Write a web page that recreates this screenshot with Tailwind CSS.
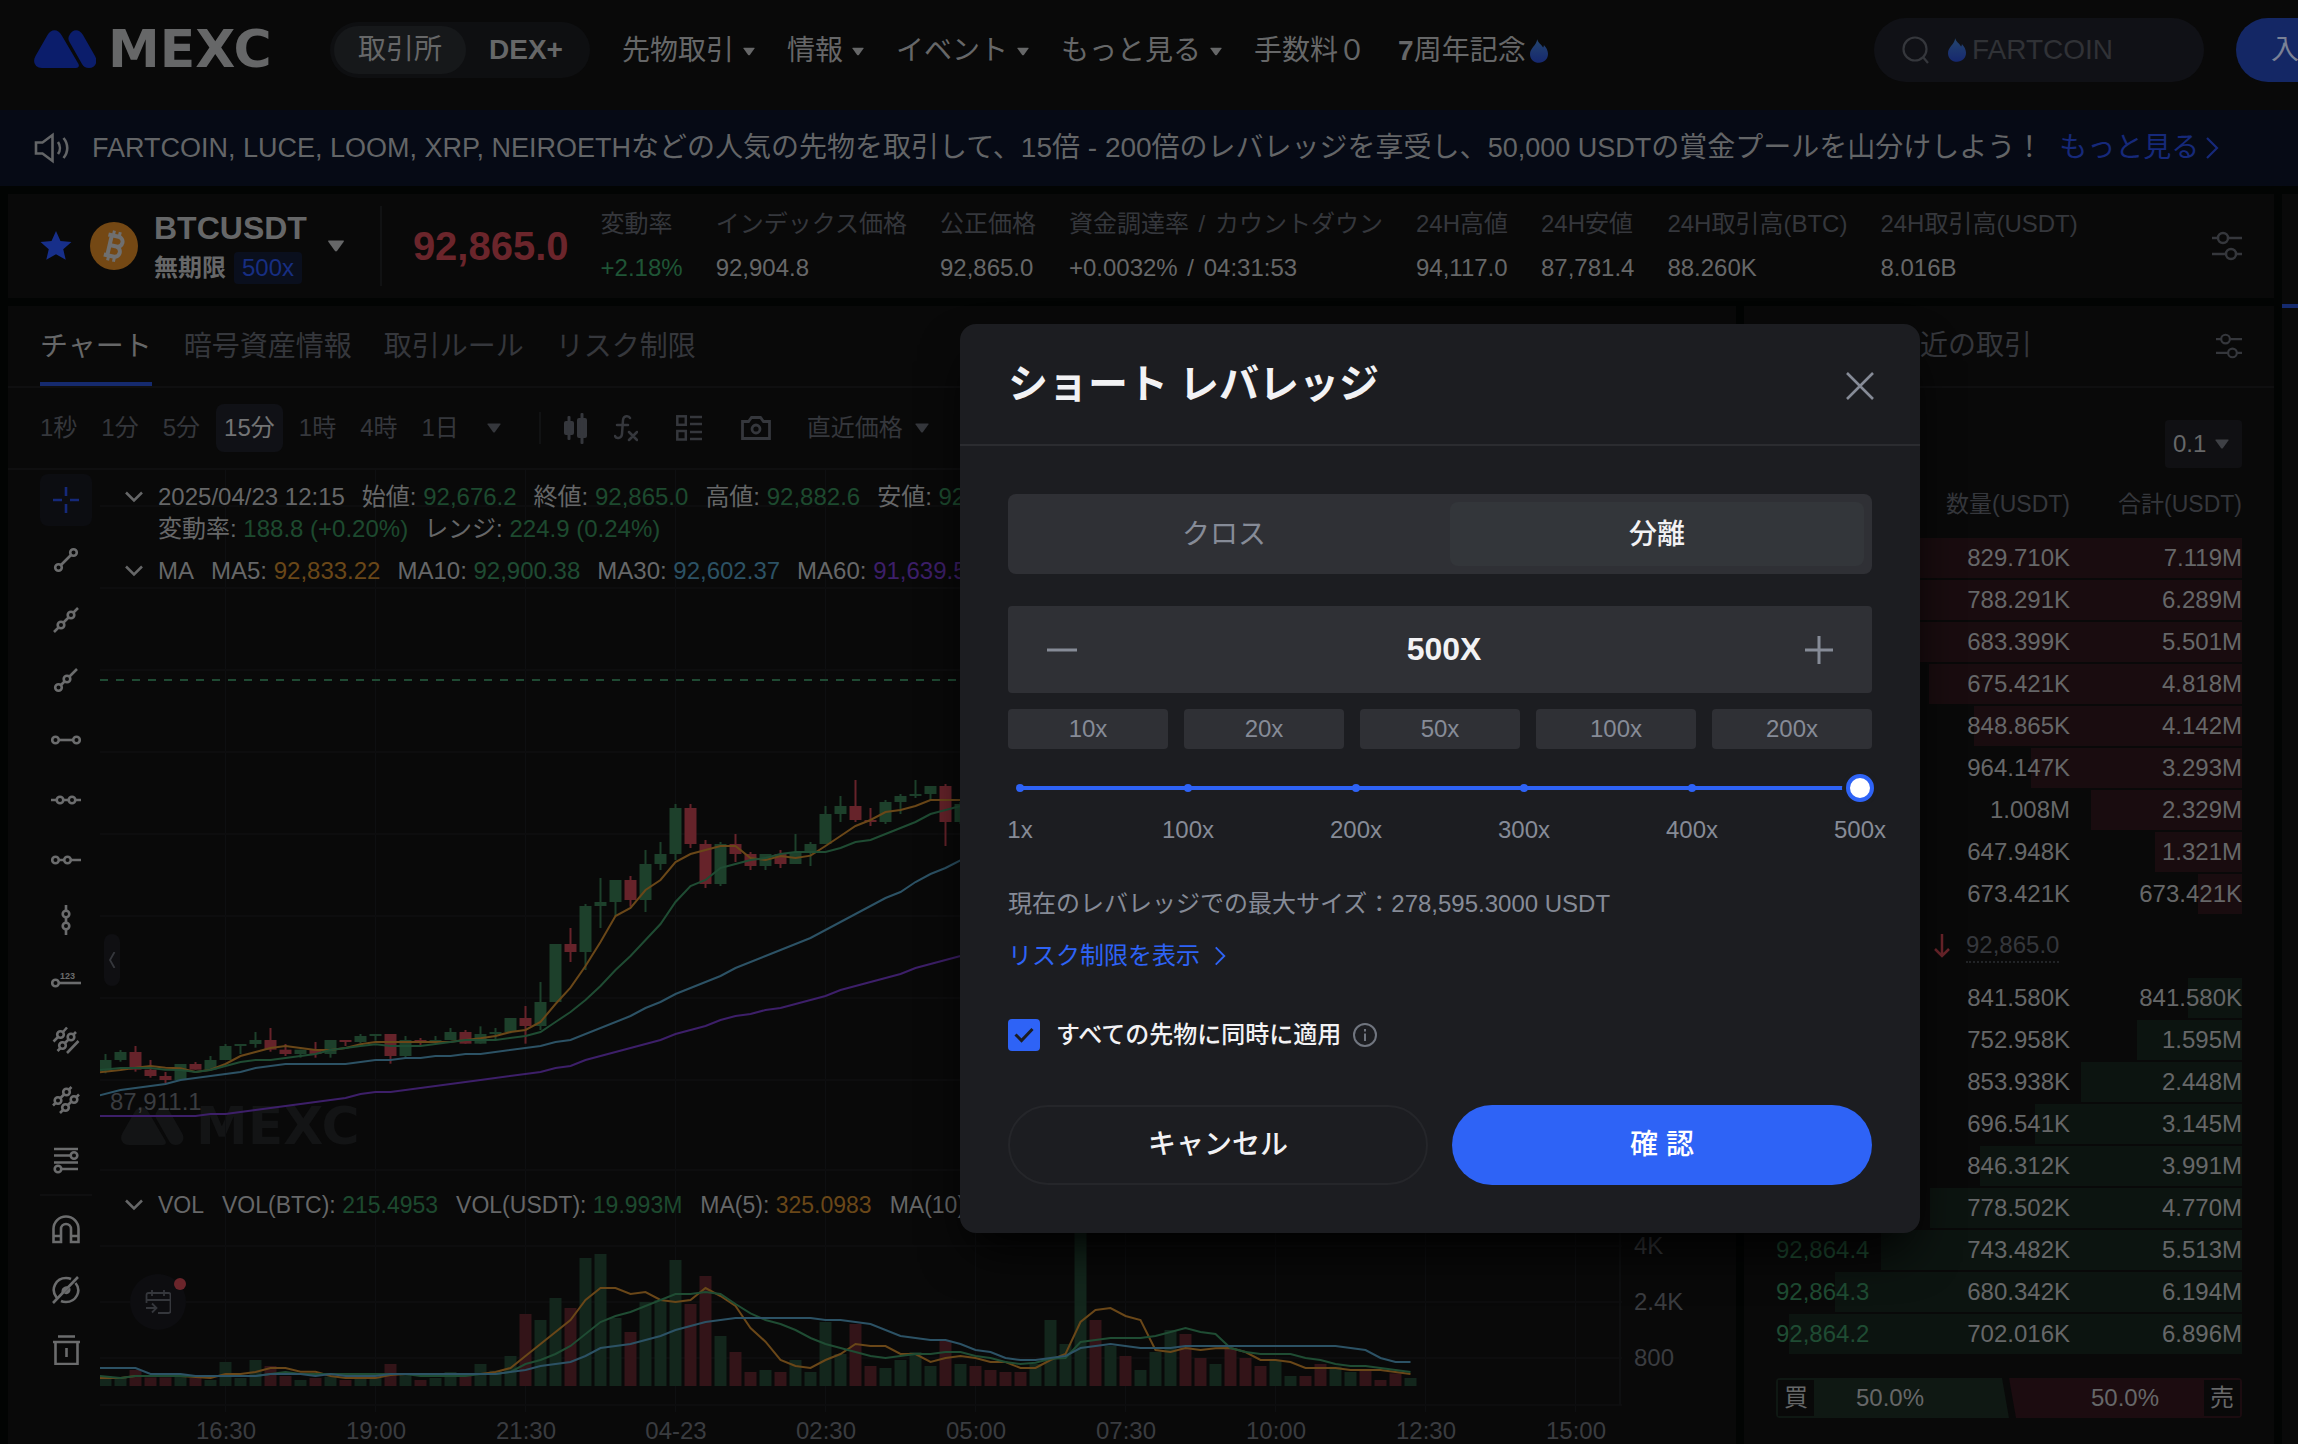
<!DOCTYPE html>
<html lang="ja">
<head>
<meta charset="utf-8">
<meta name="viewport" content="width=device-width, initial-scale=1">
<title>BTCUSDT 無期限 | MEXC</title>
<script src="https://cdn.jsdelivr.net/npm/@tailwindcss/browser@4"></script>
</head>
<body class="relative min-h-screen overflow-hidden bg-[#020403] font-['Liberation_Sans','Noto_Sans_CJK_JP',sans-serif] text-2xl leading-8 text-[#666768]">

<svg class="absolute size-0" aria-hidden="true">
  <symbol id="caret" viewBox="0 0 14 10"><path d="M1 0.5h12q1 0 .4 1L8 9q-1 1-2 0L.6 1.500Q0 .5 1 .5z" fill="currentColor"/></symbol>
  <symbol id="flame" viewBox="0 0 20 26"><path d="M8 0c1 4 5 6 6.500 9 .8-.7 1-1.700.9-2.700C18 9 20 12.500 20 16c0 6-4.500 10-10 10S0 22 0 16.500C0 10 7 7 8 0z" fill="url(#flameFill)"/></symbol>
  <symbol id="mark" viewBox="0 0 62 38"><path d="M13.500 5C17-1.500 24-1.500 27.500 5l17 29c1 2 0 4-2.500 4H8C1.500 38-2 32 1.500 26z" fill="currentColor"/><path d="M35.500 5c3-6.500 10-6.500 13.500 0l12 21c3.500 6 0 12-6 12-3.500 0-5.500-1.500-7-4L35.500 12c-1.500-2.500-1.500-4.500 0-7z" fill="currentColor"/></symbol>
  <symbol id="sliders" viewBox="0 0 30 30"><g fill="none" stroke="currentColor" stroke-width="2.500"><path d="M0 7h6M16 7h14M0 23h14M24 23h6"/><circle cx="11" cy="7" r="5"/><circle cx="19" cy="23" r="5"/></g></symbol>
  <symbol id="down" viewBox="0 0 18 12"><path d="M1 1.500l8 8 8-8" fill="none" stroke="currentColor" stroke-width="2.500"/></symbol>
  <symbol id="right" viewBox="0 0 14 22"><path d="M2 1l10 10L2 21" fill="none" stroke="currentColor" stroke-width="2.200"/></symbol>
  <defs><linearGradient id="flameFill" x1="0" y1="0" x2="0" y2="1"><stop offset="0" stop-color="#24456f"/><stop offset="1" stop-color="#16286f"/></linearGradient></defs>
</svg>

<header class="flex h-[110px] items-start overflow-hidden bg-[#090909] pl-[34px] text-[28px]">
  <a href="#" class="mt-[30px] flex h-[38px] items-center gap-3" aria-label="MEXC">
    <svg class="h-[38px] w-[62px] text-[#0b1d6b]"><use href="#mark"/></svg>
    <span class="w-[190px] font-['DejaVu_Sans',sans-serif] text-[52px] font-bold leading-none">MEXC</span>
  </a>
  <div class="ml-8 mt-[22px] flex h-14 items-center rounded-full bg-[#0e0f11] px-1">
    <button class="flex h-12 w-[132px] items-center justify-center rounded-full bg-[#16181a]">取引所</button>
    <button class="h-12 w-[120px] font-bold">DEX+</button>
  </div>
  <nav class="ml-8 mt-[35px] flex items-center gap-8 whitespace-nowrap">
    <a href="#" class="flex items-center gap-[9px]">先物取引<svg class="h-[9px] w-3"><use href="#caret"/></svg></a>
    <a href="#" class="flex items-center gap-[9px]">情報<svg class="h-[9px] w-3"><use href="#caret"/></svg></a>
    <a href="#" class="flex items-center gap-[9px]">イベント<svg class="h-[9px] w-3"><use href="#caret"/></svg></a>
    <a href="#" class="flex items-center gap-[9px]">もっと見る<svg class="h-[9px] w-3"><use href="#caret"/></svg></a>
    <a href="#">手数料０</a>
    <a href="#" class="flex items-center gap-1"><span><b>7</b>周年記念</span><svg class="h-[26px] w-[18px]"><use href="#flame"/></svg></a>
  </nav>
  <div class="ml-auto mt-[18px] flex gap-8">
    <label class="flex h-16 w-[330px] items-center rounded-full bg-[#101116] pl-7 pr-6" aria-label="検索">
      <svg class="size-7 shrink-0 text-[#35373c]" viewBox="0 0 28 28" fill="none" stroke="currentColor" stroke-width="2.200"><circle cx="13" cy="13" r="11.500"/><path d="M21 21l5 6"/></svg>
      <svg class="ml-[18px] mr-1.5 h-6 w-[18px] shrink-0"><use href="#flame"/></svg>
      <input type="text" placeholder="FARTCOIN" class="min-w-0 flex-1 bg-transparent font-medium outline-none placeholder:text-[#303236]">
    </label>
    <button class="-mr-16 h-16 w-[126px] rounded-full bg-[#142765] text-[#7a8196]">入金</button>
  </div>
</header>

<aside class="flex h-[76px] items-center whitespace-nowrap bg-[#060a15] pl-[34px] text-[28px] text-[#636567]">
  <svg class="mr-[22px] h-8 w-9" viewBox="0 0 36 32" fill="none" stroke="currentColor" stroke-width="2.600"><path d="M2 10.500h6.500L18.500 3v26L8.500 21.500H2z"/><path d="M24 10c2.500 3.500 2.500 8.500 0 12M29.500 6c5 6 5 14 0 20"/></svg>
  <p><span class="text-[27px]">FARTCOIN, LUCE, LOOM, XRP, NEIROETH</span>などの人気の先物を取引して、15倍 - 200倍のレバレッジを享受し、<span class="text-[27px]">50,000 USDT</span>の賞金プールを山分けしよう！</p>
  <a href="#" class="ml-4 flex items-center gap-1.5 text-[#16297a]">もっと見る<svg class="h-[22px] w-3.5"><use href="#right"/></svg></a>
</aside>

<div class="flex gap-2 pl-2 pt-2">
  <div class="flex min-w-0 flex-1 flex-col gap-2">

    <section class="flex h-[104px] items-center bg-[#090909] pl-8 pr-8">
      <svg class="h-[30px] w-[32px] text-[#172f8a]" viewBox="0 0 30 28"><path d="M15 0l4.200 9.300 10.300 1-7.700 6.700 2.300 10L15 21.800 5.900 27l2.300-10L.5 10.300l10.300-1z" fill="currentColor"/></svg>
      <svg class="ml-[18px] size-12" viewBox="0 0 48 48"><circle cx="24" cy="24" r="24" fill="#744814"/><g transform="rotate(13 24 24)" fill="none" stroke="#6f6f6f" stroke-width="4"><path d="M16 14h10.500a5 5 0 0 1 0 10H19.500M26.500 24a5.300 5.300 0 0 1 0 10.500H16M19.500 14v20.500"/><path d="M21 9v5M27 9v5M21 34.500v5M27 34.500v5" stroke-width="3"/></g></svg>
      <div class="ml-4">
        <h1 class="text-[32px] font-bold leading-10">BTCUSDT</h1>
        <div class="mt-1 flex items-center gap-2"><b>無期限</b><span class="rounded bg-[#0a0f1d] px-2 text-[#172e82]">500x</span></div>
      </div>
      <svg class="ml-[19px] h-3 w-5"><use href="#caret"/></svg>
      <div class="ml-[34px] h-20 w-0.5 bg-[#111213]"></div>
      <strong class="ml-[31px] text-[40px] leading-10 text-[#6b252b]">92,865.0</strong>
      <dl id="stats" class="ml-8 flex gap-[33px] whitespace-nowrap"></dl>
      <button class="ml-auto text-[#35373c]" aria-label="設定"><svg class="size-[30px]"><use href="#sliders"/></svg></button>
    </section>

    <div class="flex gap-2">
      <section class="min-w-0 flex-1 bg-[#090909]">
        <nav class="flex h-[82px] gap-8 border-b-2 border-[#0f0f10] pl-8 text-[28px] text-[#35373c]">
          <a href="#" class="flex h-20 items-center border-b-4 border-[#152a6e] pt-1.5 text-[#666768]">チャート</a>
          <a href="#" class="flex h-20 items-center border-b-4 border-transparent pt-1.5">暗号資産情報</a>
          <a href="#" class="flex h-20 items-center border-b-4 border-transparent pt-1.5">取引ルール</a>
          <a href="#" class="flex h-20 items-center border-b-4 border-transparent pt-1.5">リスク制限</a>
        </nav>
        <div class="flex h-[82px] items-center border-b-2 border-[#0f0f10] pl-6 text-[#35373c]">
          <div class="flex gap-2">
            <button class="h-12 px-2">1秒</button>
            <button class="h-12 px-2">1分</button>
            <button class="h-12 px-2">5分</button>
            <button class="h-12 rounded-lg bg-[#101116] px-2 text-[#737475]">15分</button>
            <button class="h-12 px-2">1時</button>
            <button class="h-12 px-2">4時</button>
            <button class="h-12 px-2">1日</button>
          </div>
          <button class="ml-5" aria-label="その他の時間足"><svg class="h-2.5 w-3.5"><use href="#caret"/></svg></button>
          <div class="ml-[38px] h-8 w-0.5 bg-[#111213]"></div>
          <button class="ml-[23px]" aria-label="ローソク足"><svg class="h-8 w-6" viewBox="0 0 24 32" fill="currentColor"><rect x="0" y="9" width="10" height="14" rx="2"/><rect x="3.500" y="4" width="3" height="24" rx="1"/><rect x="13" y="6" width="10" height="20" rx="2"/><rect x="16.500" y="1" width="3" height="31" rx="1"/></svg></button>
          <button class="ml-[26px]" aria-label="インジケーター"><svg class="h-7 w-6" viewBox="0 0 24 28" fill="none" stroke="currentColor" stroke-width="2.500" stroke-linecap="round"><path d="M16 4c-1-2.500-6.500-3-7 2L8 20c-.4 5-6 5-7 2M3 11h11M15 18l8 8M23 18l-8 8"/></svg></button>
          <button class="ml-[38px]" aria-label="レイアウト"><svg class="size-[26px]" viewBox="0 0 26 26" fill="none" stroke="currentColor" stroke-width="2.500"><rect x="1.300" y="1.300" width="8.500" height="8.500"/><rect x="1.300" y="16" width="8.500" height="8.500"/><path d="M14 2h12M14 9h12M14 17h12M14 24h12"/></svg></button>
          <button class="ml-[39px]" aria-label="スクリーンショット"><svg class="h-6 w-[30px]" viewBox="0 0 30 24" fill="none" stroke="currentColor" stroke-width="2.800"><path d="M1.500 5.500h6l3-4h9l3 4h6v17h-27z"/><circle cx="15" cy="13" r="4"/></svg></button>
          <label class="ml-9 flex items-center gap-3" aria-label="価格の種類">
            <select class="appearance-none bg-transparent outline-none"><option>直近価格</option></select>
            <svg class="h-2.5 w-3.5"><use href="#caret"/></svg>
          </label>
        </div>

        <div class="flex">
          <div id="tools" class="ml-8 flex w-[52px] shrink-0 flex-col gap-2 pt-1 text-[#6b6c6d]"></div>
          <div class="relative ml-2 min-w-0 flex-1">
            <div class="absolute left-5 top-[637px] flex h-[38px] items-center gap-3 text-[#131415]">
              <svg class="h-[38px] w-16"><use href="#mark"/></svg><span class="font-['DejaVu_Sans',sans-serif] text-[52px] font-bold leading-none">MEXC</span>
            </div>
            <svg id="chart" class="relative block h-[974px] w-full text-[24px]" role="img" aria-label="BTCUSDT 15分足チャート"></svg>
            <div class="absolute left-[25px] top-[11px] whitespace-nowrap">
              <div class="flex items-center gap-[15px]"><svg class="h-3 w-[18px]"><use href="#down"/></svg>
                <p class="flex gap-[17px]"><span>2025/04/23 12:15</span><span>始値: <i class="not-italic text-[#1d4a2f]">92,676.2</i></span><span>終値: <i class="not-italic text-[#1d4a2f]">92,865.0</i></span><span>高値: <i class="not-italic text-[#1d4a2f]">92,882.6</i></span><span>安値: <i class="not-italic text-[#1d4a2f]">92,657.7</i></span></p></div>
              <p class="flex gap-4 pl-[33px]"><span>変動率: <i class="not-italic text-[#1d4a2f]">188.8 (+0.20%)</i></span><span>レンジ: <i class="not-italic text-[#1d4a2f]">224.9 (0.24%)</i></span></p>
              <div class="mt-2.5 flex items-center gap-[15px]"><svg class="h-3 w-[18px]"><use href="#down"/></svg>
                <p class="flex gap-[17px]"><span>MA</span><span>MA5: <i class="not-italic text-[#6a4718]">92,833.22</i></span><span>MA10: <i class="not-italic text-[#1f4c33]">92,900.38</i></span><span>MA30: <i class="not-italic text-[#2c5265]">92,602.37</i></span><span>MA60: <i class="not-italic text-[#3d1f69]">91,639.55</i></span></p></div>
            </div>
            <div class="absolute left-[25px] top-[719px] flex items-center gap-[15px] whitespace-nowrap text-[23px]"><svg class="h-3 w-[18px]"><use href="#down"/></svg>
              <p class="flex gap-[18px]"><span>VOL</span><span>VOL(BTC): <i class="not-italic text-[#1d4a2f]">215.4953</i></span><span>VOL(USDT): <i class="not-italic text-[#1d4a2f]">19.993M</i></span><span>MA(5): <i class="not-italic text-[#6a4718]">325.0983</i></span><span>MA(10): <i class="not-italic text-[#1f4c33]">402.7716</i></span></p>
            </div>
            <button class="absolute left-1 top-[464px] flex h-[52px] w-4 items-center justify-center rounded-lg bg-[#0f0f12] text-[#35373c]" aria-label="ツールを隠す"><svg class="h-4 w-2" viewBox="0 0 8 16" fill="none" stroke="currentColor" stroke-width="1.800"><path d="M6.500 0L2 8l4.500 8"/></svg></button>
            <button class="absolute left-[30px] top-[804px] flex size-14 items-center justify-center rounded-full bg-[#0d0d10] text-[#35373c]" aria-label="イベント">
              <svg class="h-6 w-[26px]" viewBox="0 0 26 24" fill="none" stroke="currentColor" stroke-width="1.800"><path d="M1.500 13V5q0-2 2-2h20q2 0 2 2v16q0 2-2 2H13M1.500 10h24M7 0v6M19 0v6M1 18h10M7 13.500l4.500 4.500L7 22.500"/></svg>
              <span class="absolute right-0 top-1 size-3 rounded-full bg-[#6b252b]"></span>
            </button>
          </div>
        </div>
      </section>

      <section class="w-[530px] shrink-0 bg-[#090909]">
        <div class="flex h-[82px] items-center gap-8 border-b-2 border-[#0f0f10] pl-8 pr-8 text-[28px] text-[#35373c]">
          <button class="text-[#666768]">板情報</button>
          <button>最近の取引</button>
          <button class="ml-auto" aria-label="板の設定"><svg class="size-[26px]"><use href="#sliders"/></svg></button>
        </div>
        <div class="px-8 pt-8">
          <label class="ml-auto flex h-12 w-[77px] items-center justify-between rounded bg-[#101013] pl-2 pr-3" aria-label="価格単位">
            <select class="appearance-none bg-transparent outline-none"><option>0.1</option></select>
            <svg class="h-2.5 w-4 text-[#3e4045]"><use href="#caret"/></svg>
          </label>
          <table class="mt-2.5 w-full table-fixed border-separate border-spacing-x-0 border-spacing-y-0.5 text-right">
            <thead><tr class="h-14 text-[23px] text-[#35373c]"><th class="w-[140px] pb-2 text-left font-normal"></th><th class="w-[154px] pb-2 font-normal">数量(USDT)</th><th class="pb-2 font-normal">合計(USDT)</th></tr></thead>
            <tbody id="asks"></tbody>
          </table>
          <div class="flex h-[60px] items-center">
            <strong class="w-[158px] text-4xl leading-10 text-[#6b252b]">92,865.0</strong>
            <svg class="h-6 w-4 text-[#6b252b]" viewBox="0 0 16 24" fill="none" stroke="currentColor" stroke-width="2.500"><path d="M8 0v22M1 15l7 7 7-7"/></svg>
            <span class="ml-4 border-b-2 border-dotted border-[#222427] text-[#35373c]">92,865.0</span>
          </div>
          <table class="w-full table-fixed border-separate border-spacing-x-0 border-spacing-y-0.5 text-right">
            <colgroup><col class="w-[140px]"><col class="w-[154px]"><col></colgroup>
            <tbody id="bids"></tbody>
          </table>
          <div class="mt-[22px] flex h-10">
            <div class="flex flex-1 items-center rounded-l bg-[#0f1813] p-0.5 [clip-path:polygon(0_0,calc(100%-7px)_0,100%_100%,0_100%)]">
              <span class="flex h-9 w-9 items-center justify-center bg-[#090909]">買</span><span class="ml-[42px]">50.0%</span>
            </div>
            <div class="flex flex-1 items-center justify-end rounded-r bg-[#1c0c10] p-0.5 [clip-path:polygon(0_0,100%_0,100%_100%,7px_100%)]">
              <span class="mr-[45px]">50.0%</span><span class="flex h-9 w-9 items-center justify-center bg-[#090909]">売</span>
            </div>
          </div>
        </div>
      </section>
    </div>
  </div>
  <aside class="w-4 shrink-0 bg-[#090909]"><div class="h-[114px] border-b-4 border-[#152a6e]"></div></aside>
</div>

<div role="dialog" aria-modal="true" aria-labelledby="dlg-title" class="absolute left-[960px] top-[324px] w-[960px] rounded-2xl bg-[#1c1d21] text-[#868b97] shadow-2xl shadow-black">
  <div class="flex h-[122px] items-center justify-between border-b-2 border-[#2b2c30] pl-12 pr-[46px]">
    <h2 id="dlg-title" class="text-[40px] font-bold leading-10 text-[#f2f2f4]">ショート レバレッジ</h2>
    <button aria-label="閉じる" class="mt-1"><svg class="size-7" viewBox="0 0 28 28" stroke="currentColor" stroke-width="2.600"><path d="M1 1l26 26M27 1L1 27"/></svg></button>
  </div>
  <div class="p-12">
    <div role="tablist" class="flex h-20 items-center rounded-lg bg-[#2f3035] py-2 pr-2 text-[28px]">
      <button role="tab" class="h-16 flex-1 pr-2.5 pt-0.5">クロス</button>
      <button role="tab" aria-selected="true" class="h-16 w-[414px] rounded-lg bg-[#33363a] pt-0.5 font-medium text-[#f2f2f4]">分離</button>
    </div>
    <div class="mt-8 flex h-[87px] items-center rounded bg-[#2f3035] px-[39px]">
      <button aria-label="減らす"><svg class="size-[30px]" viewBox="0 0 30 30" stroke="currentColor" stroke-width="3"><path d="M0 15h30"/></svg></button>
      <input type="text" value="500X" aria-label="レバレッジ" class="min-w-0 flex-1 bg-transparent pl-1.5 text-center text-[32px] font-bold text-[#f2f2f4] outline-none">
      <button aria-label="増やす"><svg class="size-[28px]" viewBox="0 0 28 28" stroke="currentColor" stroke-width="3"><path d="M0 14h28M14 0v28"/></svg></button>
    </div>
    <div class="mt-4 grid grid-cols-5 gap-4">
      <button class="h-10 rounded bg-[#2f3035]">10x</button>
      <button class="h-10 rounded bg-[#2f3035]">20x</button>
      <button class="h-10 rounded bg-[#2f3035]">50x</button>
      <button class="h-10 rounded bg-[#2f3035]">100x</button>
      <button class="h-10 rounded bg-[#2f3035]">200x</button>
    </div>
    <div class="relative mt-[25px] flex h-7 items-center px-3">
      <div class="flex h-1 w-full items-center justify-between bg-[#2e63f6]">
        <span class="-ml-1 size-2 rounded-full bg-[#2e63f6]"></span>
        <span class="size-2 rounded-full bg-[#2e63f6]"></span>
        <span class="size-2 rounded-full bg-[#2e63f6]"></span>
        <span class="size-2 rounded-full bg-[#2e63f6]"></span>
        <span class="size-2 rounded-full bg-[#2e63f6]"></span>
        <span class="-mr-1 size-2 rounded-full bg-[#2e63f6]"></span>
      </div>
      <input type="range" min="1" max="500" value="500" aria-label="レバレッジ倍率" class="absolute -left-0.5 top-0 h-7 w-[868px] appearance-none bg-transparent [&::-webkit-slider-thumb]:size-7 [&::-webkit-slider-thumb]:appearance-none [&::-webkit-slider-thumb]:rounded-full [&::-webkit-slider-thumb]:border-4 [&::-webkit-slider-thumb]:border-[#2e63f6] [&::-webkit-slider-thumb]:bg-white [&::-webkit-slider-thumb]:shadow-[0_0_0_4px_#1c1d21]">
    </div>
    <div class="-mx-9 mt-3 flex justify-between px-3 text-center">
      <span class="w-[72px]">1x</span><span class="w-[72px]">100x</span><span class="w-[72px]">200x</span><span class="w-[72px]">300x</span><span class="w-[72px]">400x</span><span class="w-[72px]">500x</span>
    </div>
    <p class="mt-[42px]">現在のレバレッジでの最大サイズ：278,595.3000 USDT</p>
    <a href="#" class="mt-5 flex items-center gap-3.5 text-[#2e63f6]">リスク制限を表示<svg class="h-5 w-3"><use href="#right"/></svg></a>
    <label class="mt-[47px] flex h-8 items-center text-[#f2f2f4]">
      <span class="relative size-8"><input type="checkbox" checked class="size-8 appearance-none rounded bg-[#2e63f6]"><svg class="absolute left-1.5 top-2 h-4 w-5" viewBox="0 0 20 16" fill="none" stroke="#1c1d21" stroke-width="3"><path d="M1.500 7.500l6 6L18.500 2"/></svg></span>
      <span class="ml-4 font-medium">すべての先物に同時に適用</span>
      <svg class="ml-3 size-6 text-[#70757f]" viewBox="0 0 24 24" fill="none" stroke="currentColor" stroke-width="2"><circle cx="12" cy="12" r="11"/><path d="M12 10.500V18M12 6v2.500"/></svg>
    </label>
    <div class="mt-[54px] grid grid-cols-2 gap-6 text-[28px] font-medium">
      <button class="h-20 rounded-full border-2 border-[#25262a] text-[#f2f2f4]">キャンセル</button>
      <button class="h-20 rounded-full bg-[#2e63f6] text-white">確 認</button>
    </div>
  </div>
</div>

<script>
// ticker statistics
const slash = '<span class="mx-[3px]"> / </span>';
const stats = [
  ['変動率', '+2.18%', 'text-[#1f5536]'], ['インデックス価格', '92,904.8', ''], ['公正価格', '92,865.0', ''],
  ['資金調達率' + slash + 'カウントダウン', '+0.0032%' + slash + '04:31:53', ''], ['24H高値', '94,117.0', ''], ['24H安値', '87,781.4', ''],
  ['24H取引高(BTC)', '88.260K', ''], ['24H取引高(USDT)', '8.016B', '']];
document.getElementById('stats').innerHTML = stats.map(([k, v, c]) =>
  `<div><dt class="text-[#35373c]">${k}</dt><dd class="mt-3 ${c}">${v}</dd></div>`).join('');

// drawing tools, each on a 30x30 grid
const dot = (x, y) => `<circle cx="${x}" cy="${y}" r="3.300"/>`;
const tools = [
  ['十字線', '<path d="M2 15h9M19 15h9M15 2v9M15 19v9"/>'],
  ['トレンドライン', dot(7.5, 22.5) + dot(22.5, 7.5) + '<path d="M10 20L20 10"/>'],
  ['延長線', dot(10, 20) + dot(20, 10) + '<path d="M3 27l4.500-4.500M12.500 17.500l5-5M22.500 7.500L27 3"/>'],
  ['半直線', dot(7.5, 22.5) + dot(16, 14) + '<path d="M10 20l3.500-3.500M18.500 11.500L26 4"/>'],
  ['水平線分', dot(4.5, 15) + dot(25.5, 15) + '<path d="M8 15h14"/>'],
  ['水平線', dot(9, 15) + dot(21, 15) + '<path d="M0 15h5.500M12.500 15h5M24.500 15H30"/>'],
  ['水平半直線', dot(4.5, 15) + dot(16.5, 15) + '<path d="M8 15h5M20 15h10"/>'],
  ['垂直線', dot(15, 9) + dot(15, 21) + '<path d="M15 0v5.500M15 12.500v5M15 24.500V30"/>'],
  ['価格線', dot(4.5, 18) + '<path d="M8 18h22"/><text x="9" y="14" font-size="9" font-weight="700" fill="currentColor" stroke="none">123</text>'],
  ['チャネル', dot(9.5, 9.5) + dot(20, 12) + dot(11.5, 20.5) + '<path d="M2.500 16.500L7 12M12 7l4-4.500M6.500 26l3-3M14 18l4-4M22.500 9.500L25 7M16 28l11.500-12"/>'],
  ['平行線', dot(15.5, 7) + dot(7, 15.5) + dot(23, 14.5) + dot(14.5, 22.5) + '<path d="M2 20.500L4.500 18M9.500 13l3.500-3.500M18 4.500L20.500 2M9 28l3-3M17 20l3.500-3.500M25.500 12L28 9.500"/>'],
  ['フィボナッチ', dot(23, 10.5) + dot(7, 24) + '<path d="M3 4h24M3 10.500h16.500M3 17.500h24M10.500 24H27"/>'],
  null,
  ['マグネット', '<path d="M2.500 27V14a12.500 12.500 0 0 1 25 0v13H20V14a5 5 0 0 0-10 0v13zM2.500 21H10M20 21h7.500"/>'],
  ['非表示', '<path d="M5.500 22.500C-1 14 5 3 15 3q3 0 5 1M24.500 8C31 16 25 27 15 27q-3 0-5-1M2 28L27 2"/><path d="M11 18.500c-2-4 2-8.500 6-7zM19 12.500c2 4-2 8.500-6 6z" fill="currentColor" stroke="none"/>'],
  ['削除', '<path d="M7 1.500h17M2 7h27M4.500 7v22h22V7M15.500 13v9"/>']];
document.getElementById('tools').innerHTML = tools.map((t, i) => t
  ? `<button aria-label="${t[0]}" class="${i ? 'flex size-[52px] items-center justify-center' : 'flex size-[52px] items-center justify-center rounded-lg bg-[#0c0d11] text-[#15297a]'}"><svg class="size-[30px]" viewBox="0 0 30 30" fill="none" stroke="currentColor" stroke-width="2.600">${t[1]}</svg></button>`
  : '<div class="h-0.5 bg-[#0f0f10]"></div>').join('');

// order book: price, amount, cumulative total, depth %
const row = (c, rgb) => ([p, a, t, d]) =>
  `<tr class="h-10" style="background:linear-gradient(to left,${rgb} ${d}%,transparent ${d}%)"><td class="text-left ${c}">${p}</td><td>${a}</td><td>${t}</td></tr>`;
document.getElementById('asks').innerHTML = [
  ['92,865.9', '829.710K', '7.119M', 99.3], ['92,865.8', '788.291K', '6.289M', 87.8], ['92,865.7', '683.399K', '5.501M', 76.7],
  ['92,865.6', '675.421K', '4.818M', 67.2], ['92,865.5', '848.865K', '4.142M', 57.6], ['92,865.4', '964.147K', '3.293M', 45.3],
  ['92,865.3', '1.008M', '2.329M', 32.4], ['92,865.2', '647.948K', '1.321M', 18.7], ['92,865.1', '673.421K', '673.421K', 9.4]
].map(row('text-[#6b252b]', '#190c0f')).join('');
document.getElementById('bids').innerHTML = [
  ['92,865.0', '841.580K', '841.580K', 11.5], ['92,864.9', '752.958K', '1.595M', 22.5], ['92,864.8', '853.938K', '2.448M', 34.5],
  ['92,864.7', '696.541K', '3.145M', 44.4], ['92,864.6', '846.312K', '3.991M', 56.2], ['92,864.5', '778.502K', '4.770M', 67],
  ['92,864.4', '743.482K', '5.513M', 77.5], ['92,864.3', '680.342K', '6.194M', 87.3], ['92,864.2', '702.016K', '6.896M', 97.3]
].map(row('text-[#1f4c33]', '#0c1410')).join('');

// candles: direction, body top, body bottom, wick top, wick bottom (thirds of a pixel, origin 230px down)
const candles = `g 1080 1112 1062 1120|g 1056 1080 1050 1085|r 1056 1109 1038 1115|r 1109 1128 1080 1133|r 1128 1140 1116 1150|g 1092 1140 1092 1140|r 1092 1109 1086 1109|g 1080 1109 1068 1109|g 1038 1080 1032 1080|g 1032 1038 1032 1062|g 1020 1032 996 1043|r 1020 1049 984 1055|r 1049 1062 1032 1068|g 1049 1062 1049 1073|r 1049 1062 1026 1073|g 1020 1062 1020 1073|r 1020 1026 1020 1038|g 1008 1026 1002 1030|g 1002 1008 1002 1022|r 1002 1068 1002 1091|g 1020 1068 1008 1075|r 1020 1026 1014 1035|g 1020 1026 1008 1030|g 996 1020 984 1020|r 996 1031 990 1031|g 1002 1031 979 1031|g 996 1002 984 1018|g 954 996 954 1000|r 954 978 918 1031|g 906 978 846 990|g 732 906 732 906|r 732 756 684 786|g 618 756 612 810|g 606 618 534 684|g 540 606 540 648|r 540 600 528 620|g 492 600 450 636|g 462 492 426 510|g 324 462 312 480|r 324 432 312 444|r 432 552 420 564|g 432 552 426 558|r 432 462 402 486|r 462 498 456 510|g 462 498 462 510|r 462 492 450 504|g 456 492 402 492|g 432 456 426 498|g 342 432 318 432|g 318 342 288 366|r 318 360 240 366|r 360 366 324 378|g 306 366 300 372|g 288 306 282 342|g 282 288 240 294|g 258 282 258 300|r 258 366 252 438|g 312 366 306 372`;
const volumes = `g678 g684 r660 r682 r682 g680 r684 g690 g636 g684 g630 r648 r678 g690 r684 g680 r690 g684 g684 r642 g672 r690 g684 g666 r678 g642 g662 g618 r492 g510 g444 r474 g324 g312 g504 r546 g456 g450 g330 r462 r378 g558 r606 r666 g660 r666 g630 g666 g516 g612 r522 r648 g654 g630 g606 g648 r572 g642 r648 r660 r666 r666 g642 g510 g582 g240 r510 g588 r618 g660 g606 g540 r552 r624 g642 r594 r624 r648 g632 g678 r678 r642 g650 g666 r662 r690 r670 g684`.split(' ');
// moving averages as "bar index,value"
const ma = {
  '#6a4718': '-.4,1117 1,1110 2,1103 3,1098 4,1103 5,1105 6,1116 7,1109 8,1092 9,1068 10,1056 11,1044 12,1038 13,1044 14,1050 15,1050 16,1044 17,1033 18,1026 22,1026 23,1025 24,1020 25,1015 26,1008 27,996 28,990 29,966 30,912 31,863 32,798 33,726 34,648 35,624 36,570 37,540 38,486 39,462 40,450 41,438 42,438 43,474 44,480 45,468 46,474 47,467 48,438 49,408 50,378 51,360 52,336 53,330 54,318 55,300 58,300',
  '#1f4c33': '-.4,1110 1,1104 3,1104 4,1109 5,1110 6,1116 7,1110 8,1098 9,1086 10,1080 11,1080 12,1074 13,1068 14,1062 15,1050 16,1044 17,1038 18,1033 19,1038 21,1038 22,1032 23,1026 24,1020 26,1020 28,1008 29,996 30,966 31,936 32,900 33,858 34,810 35,768 36,720 37,672 38,606 39,558 40,540 41,504 42,492 43,480 44,474 45,462 46,456 48,456 49,444 50,426 51,420 52,402 53,384 54,366 55,342 56,330 58,306',
  '#2c5265': '-.4,1186 1,1170 4,1152 5,1140 6,1134 9,1116 10,1104 12,1092 16,1092 18,1080 19,1080 20,1074 21,1074 22,1068 23,1068 24,1062 25,1062 29,1038 30,1026 31,1020 35,948 36,924 37,906 38,882 41,828 42,804 44,768 47,714 49,666 52,594 53,576 54,546 55,522 56,504 58,458',
  '#3d1f69': '-.4,1248 6,1248 7,1242 8,1242 9,1236 10,1230 16,1194 17,1182 18,1176 19,1176 25,1140 29,1116 30,1104 31,1098 32,1080 37,1020 38,1002 40,978 41,960 42,948 43,942 44,930 45,924 48,888 49,870 53,822 54,804 58,756'
};
const vma = {
  '#6a4718': '-.4,684 1,684 2,678 5,678 7,684 8,672 9,672 10,666 11,654 12,654 13,665 14,665 15,678 16,684 18,684 19,675 20,672 25,672 26,666 27,654 28,618 31,510 32,450 33,414 34,414 35,432 36,426 37,450 38,456 39,450 40,414 41,438 42,468 43,534 44,575 45,630 46,648 47,654 48,630 49,612 50,582 51,588 52,588 53,612 54,612 55,636 56,624 57,618 58,624 59,636 60,636 61,654 62,654 63,630 64,612 65,516 66,480 67,474 68,498 69,510 70,600 71,606 72,594 73,600 74,595 75,594 76,606 77,630 78,630 79,636 80,654 82,654 83,660 85,660 86,666 87,672',
  '#1f4c33': '-.4,678 1,684 2,678 10,678 11,672 12,666 13,672 20,672 21,678 24,678 25,672 26,672 27,666 28,642 29,630 30,612 31,588 33,516 34,498 35,486 38,432 39,432 40,426 41,432 42,462 43,490 44,510 45,522 46,540 47,564 48,582 51,618 52,624 54,612 55,612 56,606 57,606 58,618 59,624 60,636 61,642 62,638 63,626 64,624 65,576 67,564 69,564 70,558 72,534 73,546 74,552 75,594 76,606 77,612 79,612 80,624 81,630 82,642 83,648 84,648 87,666',
  '#2c5265': '-.4,654 2,654 3,672 5,672 6,678 10,678 11,672 13,672 14,678 15,672 16,678 18,678 19,672 26,672 28,660 29,648 31,636 32,618 33,594 35,582 37,558 38,540 40,516 42,504 47,504 48,510 49,510 51,522 53,558 55,570 56,570 57,582 58,600 59,606 60,624 61,630 62,630 64,618 65,594 67,582 69,594 71,594 72,588 82,588 84,600 85,624 86,636 87,636'
};
const cx = k => 5.5 + 15 * k, py = v => 230 + v / 3, vy = v => 680 + v / 3;
const up = '#1d402b', down = '#66232a';
let s = '';
for (let i = 0; i < 10; i++) s += `<path d="M${125.5 + 150 * i} 0V942" stroke="#0e0f11"/>`;
for (const y of [36, 118, 200, 282, 364, 446, 528, 610, 700, 776, 832, 888, 935]) s += `<path d="M0 ${y}H1522" stroke="#0d0d0e" stroke-width="2"/>`;
s += '<path d="M1520 0V935" stroke="#0e0f10" stroke-width="2"/>';
s += '<path d="M0 210H1520" stroke="#1f4a33" stroke-width="2" stroke-dasharray="8 8"/>';
candles.split('|').forEach((c, k) => {
  const [d, a, b, w, z] = c.split(' '), f = d === 'g' ? up : down;
  s += `<path d="M${cx(k)} ${py(+w)}V${py(+z)}" stroke="${f}" stroke-width="2"/><rect x="${cx(k) - 6}" y="${py(+a)}" width="12" height="${(b - a) / 3}" fill="${f}"/>`;
});
volumes.forEach((v, k) => {
  const y = vy(+v.slice(1));
  s += `<rect x="${cx(k) - 6}" y="${y}" width="12" height="${916 - y}" fill="${v[0] === 'g' ? '#13261c' : '#331418'}"/>`;
});
const line = (set, fy) => Object.entries(set).forEach(([c, pts]) => {
  s += `<polyline fill="none" stroke="${c}" stroke-width="2" points="${pts.split(' ').map(p => { const [k, v] = p.split(','); return cx(+k) + ',' + fy(+v); }).join(' ')}"/>`;
});
line(ma, py); line(vma, vy);
['16:30', '19:00', '21:30', '04-23', '02:30', '05:00', '07:30', '10:00', '12:30', '15:00'].forEach((t, i) => {
  s += `<text x="${126 + 150 * i}" y="969" text-anchor="middle" fill="#3a3c40">${t}</text>`;
});
[['4K', 776], ['2.4K', 832], ['800', 888]].forEach(([t, y]) => { s += `<text x="1534" y="${y + 8}" fill="#3a3c40">${t}</text>`; });
s += '<text x="10" y="640" fill="#3a3c40">87,911.1</text>';
document.getElementById('chart').innerHTML = s;
</script>
</body>
</html>
